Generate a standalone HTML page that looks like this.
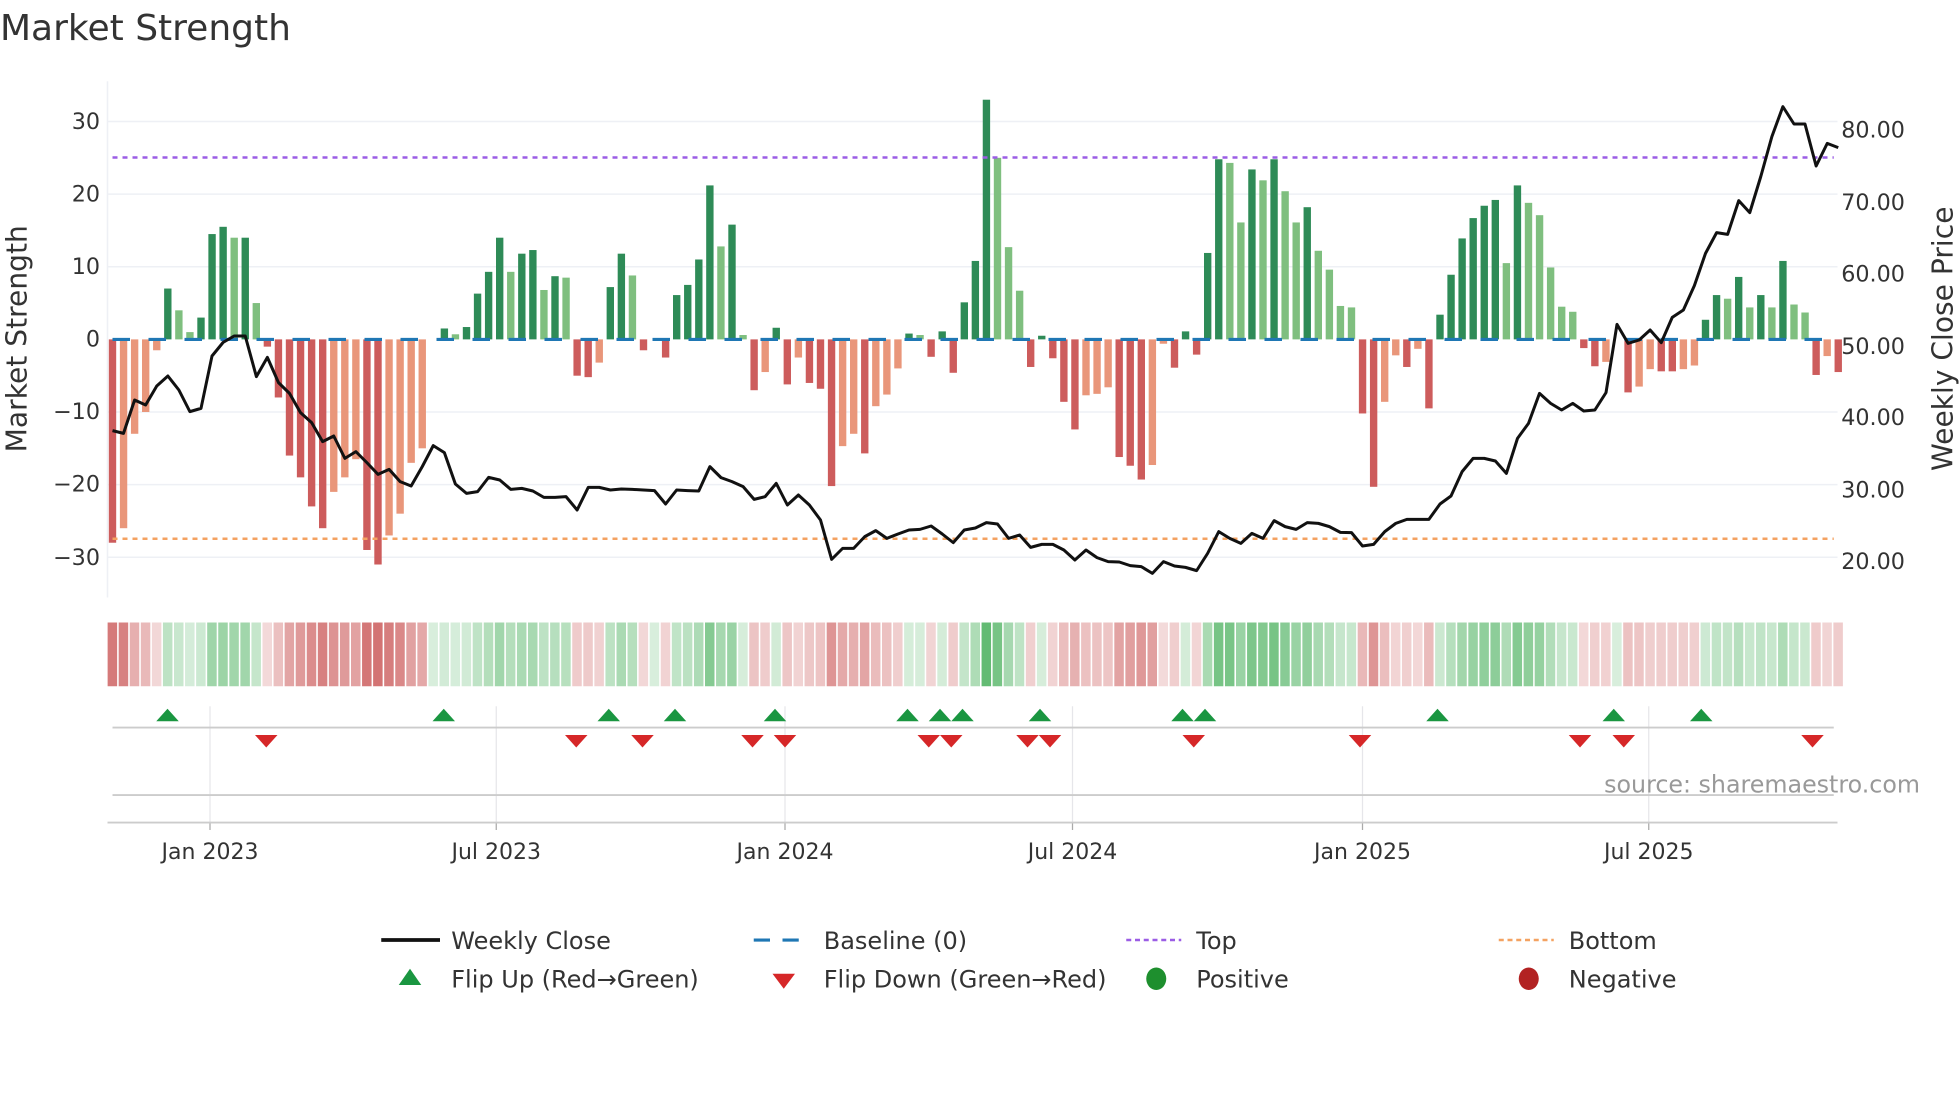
<!DOCTYPE html>
<html><head><meta charset="utf-8"><style>
html,body{margin:0;padding:0;background:#fff;}
svg{display:block;font-family:"DejaVu Sans","Liberation Sans",sans-serif;}
</style></head><body>
<svg id="s" width="1960" height="1102" viewBox="0 0 1568 881.6" xmlns="http://www.w3.org/2000/svg">
<rect width="1568" height="882" fill="#fff"/>
<text x="0" y="32" font-size="28.8" fill="#333">Market Strength</text>
<g id="grid"></g>
<g id="heat"></g>
<g id="bars"></g>
<g id="lines"></g>
<g id="flips"></g>
<g font-size="17.8" fill="#333" text-anchor="end">
<text x="80" y="103">30</text><text x="80" y="161">20</text><text x="80" y="219">10</text><text x="80" y="277">0</text>
<text x="80" y="335">−10</text><text x="80" y="393">−20</text><text x="80" y="452">−30</text>
</g>
<g font-size="17.8" fill="#333">
<text x="1473" y="110">80.00</text><text x="1473" y="168">70.00</text><text x="1473" y="225">60.00</text><text x="1473" y="283">50.00</text>
<text x="1473" y="340">40.00</text><text x="1473" y="398">30.00</text><text x="1473" y="455">20.00</text>
</g>
<text transform="translate(21,271) rotate(-90)" font-size="22.5" fill="#333" text-anchor="middle">Market Strength</text>
<text transform="translate(1562,271) rotate(-90)" font-size="22.5" fill="#333" text-anchor="middle">Weekly Close Price</text>
<g font-size="17.6" fill="#333" text-anchor="middle">
<text x="168" y="687">Jan 2023</text><text x="397" y="687">Jul 2023</text><text x="628" y="687">Jan 2024</text>
<text x="858" y="687">Jul 2024</text><text x="1090" y="687">Jan 2025</text><text x="1319" y="687">Jul 2025</text>
</g>
<text x="1536" y="634" font-size="19" fill="#999" text-anchor="end">source: sharemaestro.com</text>
<g font-size="19.2" fill="#333">
<line x1="305" y1="752" x2="352" y2="752" stroke="#111" stroke-width="3"/>
<text x="361" y="759">Weekly Close</text>
<line x1="603" y1="752" x2="647" y2="752" stroke="#1f77b4" stroke-width="2.5" stroke-dasharray="13,10"/>
<text x="659" y="759">Baseline (0)</text>
<line x1="901" y1="752" x2="945" y2="752" stroke="#9b5de5" stroke-width="2" stroke-dasharray="4,3"/>
<text x="957" y="759">Top</text>
<line x1="1199" y1="752" x2="1243" y2="752" stroke="#f4a261" stroke-width="2" stroke-dasharray="4,3"/>
<text x="1255" y="759">Bottom</text>
<polygon points="319,788 328,775 337,788" fill="#1a9641"/>
<text x="361" y="790">Flip Up (Red→Green)</text>
<polygon points="618,779 636,779 627,791" fill="#d62728"/>
<text x="659" y="790">Flip Down (Green→Red)</text>
<ellipse cx="925" cy="783" rx="8" ry="9" fill="#1e8f2e"/>
<text x="957" y="790">Positive</text>
<ellipse cx="1223" cy="783" rx="8" ry="9" fill="#b22222"/>
<text x="1255" y="790">Negative</text>
</g>
</svg>
<script>
var NS="http://www.w3.org/2000/svg";
function el(p,t,a){var e=document.createElementNS(NS,t);for(var k in a)e.setAttribute(k,a[k]);p.appendChild(e);return e;}
var V=[-28,-26,-13,-10,-1.5,7,4,1,3,14.5,15.5,14,14,5,-1,-8,-16,-19,-23,-26,-21,-19,-16.5,-29,-31,-27,-24,-17,-15,0,1.5,0.7,1.7,6.3,9.3,14,9.3,11.8,12.3,6.8,8.7,8.5,-5,-5.2,-3.2,7.2,11.8,8.8,-1.5,0,-2.5,6.1,7.5,11,21.2,12.8,15.8,0.6,-7,-4.5,1.6,-6.2,-2.5,-6,-6.8,-20.2,-14.7,-13,-15.7,-9.2,-7.6,-4,0.8,0.6,-2.4,1.1,-4.6,5.1,10.8,33,25,12.7,6.7,-3.8,0.5,-2.6,-8.6,-12.4,-7.7,-7.5,-6.6,-16.2,-17.4,-19.3,-17.3,-0.6,-3.9,1.1,-2.1,11.9,24.8,24.3,16.1,23.4,21.9,24.8,20.4,16.1,18.2,12.2,9.6,4.6,4.4,-10.2,-20.3,-8.6,-2.2,-3.8,-1.3,-9.5,3.4,8.9,13.9,16.7,18.4,19.2,10.5,21.2,18.8,17.1,9.9,4.5,3.8,-1.2,-3.7,-3.1,0,-7.3,-6.5,-4.1,-4.4,-4.4,-4.1,-3.6,2.7,6.1,5.6,8.6,4.4,6.1,4.4,10.8,4.8,3.7,-4.9,-2.3,-4.5];
var Z=[1052,1060,960,975,918,888,930,995,985,828,787,768,768,890,832,908,940,998,1028,1085,1068,1135,1115,1148,1183,1168,1205,1218,1160,1097,1118,1212,1240,1235,1192,1200,1228,1225,1233,1252,1252,1250,1290,1222,1222,1230,1227,1228,1230,1232,1272,1230,1232,1233,1160,1193,1205,1220,1258,1250,1210,1275,1245,1275,1320,1438,1405,1405,1370,1352,1375,1362,1350,1348,1338,1362,1388,1350,1344,1328,1332,1375,1365,1402,1393,1393,1410,1440,1410,1433,1445,1446,1457,1460,1480,1445,1458,1462,1472,1420,1355,1375,1390,1360,1375,1322,1340,1348,1328,1330,1340,1357,1358,1398,1393,1355,1330,1318,1318,1318,1272,1248,1175,1135,1135,1143,1180,1075,1030,940,970,990,970,993,990,938,733,790,780,750,788,712,690,617,520,458,463,362,398,290,170,80,132,132,258,190,203];
var X0=90,P=8.85,Y0=271.5,U=5.81;
var g=document.getElementById('grid');
[30,20,10,-10,-20,-30].forEach(function(v){var y=Y0-v*U;el(g,'line',{x1:86,x2:1470,y1:y,y2:y,stroke:'#eef0f5','stroke-width':1.2});});
el(g,'line',{x1:86,x2:86,y1:65,y2:478,stroke:'#eef0f5','stroke-width':1.2});
[168,397,628,858,1090,1319].forEach(function(x){el(g,'line',{x1:x,x2:x,y1:565,y2:658,stroke:'#e6e6ea','stroke-width':1});el(g,'line',{x1:x,x2:x,y1:658,y2:664,stroke:'#aaa','stroke-width':1});});
el(g,'line',{x1:90,x2:1467,y1:582,y2:582,stroke:'#ccc','stroke-width':1.5});
el(g,'line',{x1:90,x2:1467,y1:636,y2:636,stroke:'#ccc','stroke-width':1.5});
el(g,'line',{x1:86,x2:1470,y1:658,y2:658,stroke:'#ccc','stroke-width':1.5});
var b=document.getElementById('bars'),h=document.getElementById('heat');
function mix(c,t){return 'rgb('+[0,1,2].map(function(i){return Math.round(255+(c[i]-255)*t);}).join(',')+')';}
for(var i=0;i<V.length;i++){
 var v=V[i],x=X0+i*P,prev=i>0?V[i-1]:0,col;
 if(v>0)col=(v>=prev)?'#2e8b57':'#7fbf7f';else col=(v<=prev)?'#cd5c5c':'#e9967a';
 if(v!==0){var y=v>0?Y0-v*U:Y0;el(b,'rect',{x:x-2.95,y:y,width:5.9,height:Math.abs(v)*U,fill:col});}
 var t=0.2+0.6*Math.min(1,Math.abs(v)/30);
 var hc=v>=0?mix([60,170,80],t):mix([200,80,80],t);
 el(h,'rect',{x:x-3.9,y:498,width:7.6,height:51,fill:hc});
}
var l=document.getElementById('lines');
el(l,'line',{x1:90,x2:1467,y1:Y0,y2:Y0,stroke:'#1f77b4','stroke-width':2.5,'stroke-dasharray':'14,14.8'});
el(l,'line',{x1:90,x2:1467,y1:126,y2:126,stroke:'#9b5de5','stroke-width':2,'stroke-dasharray':'4,4'});
el(l,'line',{x1:90,x2:1467,y1:431,y2:431,stroke:'#f4a261','stroke-width':2,'stroke-dasharray':'4,4'});
var pts=Z.map(function(z,i){return (X0+i*P).toFixed(1)+','+((80+z/3)/1.25).toFixed(1);}).join(' ');
el(l,'polyline',{points:pts,fill:'none',stroke:'#111','stroke-width':2.4,'stroke-linejoin':'round'});
var f=document.getElementById('flips');
[134,355,487,540,620,726,752,770,832,946,964,1150,1291,1361].forEach(function(x){el(f,'polygon',{points:(x-9)+',577 '+x+',567 '+(x+9)+',577',fill:'#1a9641'});});
[213,461,514,602,628,743,761,822,840,955,1088,1264,1299,1450].forEach(function(x){el(f,'polygon',{points:(x-9)+',588 '+(x+9)+',588 '+x+',598',fill:'#d62728'});});
</script>
</body></html>
